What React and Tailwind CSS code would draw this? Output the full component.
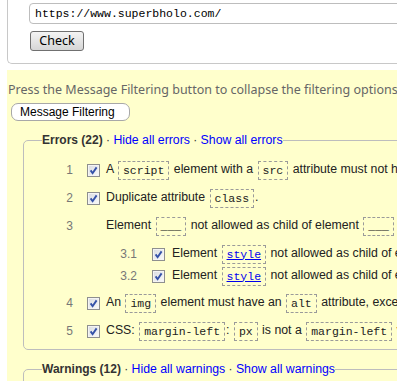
import React from "react";

function Cb() {
  return (
    <span className="relative inline-block w-[13px] h-[13px] border border-[#8e8f8f] bg-linear-to-br from-[#d8dbe0] to-[#fbfbfb] shrink-0">
      <span className="absolute inset-0 border border-[#f4f4f4]"></span>
      <svg viewBox="0 0 11 11" className="absolute left-0 top-0 w-[11px] h-[11px]">
        <path d="M2.6 5.4 L4.6 8.2 L8.6 2.4" stroke="#3552a8" strokeWidth="1.9" fill="none" strokeLinejoin="miter" />
      </svg>
    </span>
  );
}

function Code({ children, link }) {
  return (
    <span className="inline-flex items-center h-[19px] px-[4px] mx-[1px] border border-dashed border-[#9a9a9a] font-['Liberation_Mono',monospace] text-[11.5px] align-middle text-[#222]">
      {link ? <a className="text-[#0000ee] underline">{children}</a> : children}
    </span>
  );
}

function Row({ n, cb = true, sub = false, children }) {
  return (
    <div className={sub ? "flex items-center h-[22px]" : "flex items-center h-[28px]"}>
      <span className="w-[31px] text-right text-[#777] text-[12px] shrink-0">{n}</span>
      <span className={sub ? "flex w-[13px] ml-[15px] mr-[7px] shrink-0" : "flex w-[13px] ml-[14px] mr-[6px] shrink-0"}>
        {cb && <Cb />}
      </span>
      <span className="whitespace-nowrap text-[12.3px]">{children}</span>
    </div>
  );
}

export default function App() {
  return (
    <div className="w-[397px] h-[381px] overflow-hidden bg-white font-['Liberation_Sans',Arial,sans-serif] text-[12px] text-[#222]">
      <div className="ml-[7px] w-[600px] border-l border-b border-[#c8c8c8] rounded-bl-[5px] pt-[3px] pb-[12px] pl-[21px]">
        <div className="h-[21px] w-[500px] border border-[#bdbdbd] rounded-[4px] bg-white flex items-center pl-[5px] font-['Liberation_Mono',monospace] text-[11.5px] text-black">
          https://www.superbholo.com/
        </div>
        <button className="mt-[7px] ml-[1px] w-[54px] h-[20px] border border-[#707070] rounded-[3px] bg-linear-to-b from-[#f4f4f4] to-[#d6d6d6] font-['Noto_Sans',sans-serif] text-[12.5px] text-black leading-none flex items-center justify-center">
          Check
        </button>
      </div>

      <div className="mt-[6px] ml-[7px] bg-[#ffffcc] pt-[12px] h-[400px]">
        <div className="pl-[1px] h-[16px] leading-[16px] whitespace-nowrap font-['Noto_Sans',sans-serif] text-[12.5px] text-[#666]">
          Press the Message Filtering button to collapse the filtering options and error/warning/info counts.
        </div>
        <button className="mt-[5px] ml-[4px] w-[119px] h-[18px] border border-[#a8a8a8] rounded-[7px] bg-white text-[12px] text-black leading-none flex items-center pl-[8px]">
          Message Filtering
        </button>

        <fieldset className="mt-[12px] ml-[16px] border border-[#bdbdbd] rounded-[5px] pl-[18px] pt-[9px] pb-[4px]">
          <legend className="px-0 leading-[14px] whitespace-nowrap text-[#333]">
            <b>Errors (22)</b> · <a className="text-[#0000ff] text-[12.3px]">Hide all errors</a> · <a className="text-[#0000ff] text-[12.3px]">Show all errors</a>
          </legend>
          <Row n="1">
            A <Code>script</Code> element with a <Code>src</Code> attribute must not have a <Code>type</Code> attribute whose value is anything other than the empty string.
          </Row>
          <Row n="2">
            Duplicate attribute <Code>class</Code>.
          </Row>
          <Row n="3" cb={false}>
            Element <Code>___</Code> not allowed as child of element <Code>___</Code> in this context.
          </Row>
          <div className="ml-[64px] mt-[3px] mb-[2px]">
            <Row n="3.1" sub>
              Element <Code link>style</Code> not allowed as child of element <Code>body</Code> in this context.
            </Row>
            <Row n="3.2" sub>
              Element <Code link>style</Code> not allowed as child of element <Code>body</Code> in this context.
            </Row>
          </div>
          <Row n="4">
            An <Code>img</Code> element must have an <Code>alt</Code> attribute, except under certain conditions.
          </Row>
          <Row n="5">
            CSS: <Code>margin-left</Code>: <Code>px</Code> is not a <Code>margin-left</Code> value.
          </Row>
        </fieldset>

        <fieldset className="mt-[12px] ml-[16px] border border-[#bdbdbd] rounded-[5px] pl-[18px] pt-[9px] pb-[4px]">
          <legend className="px-0 leading-[14px] whitespace-nowrap text-[#333]">
            <b>Warnings (12)</b> · <a className="text-[#0000ff] text-[12.3px]">Hide all warnings</a> · <a className="text-[#0000ff] text-[12.3px]">Show all warnings</a>
          </legend>
          <Row n="1">
            The <Code>type</Code> attribute is unnecessary for JavaScript resources.
          </Row>
        </fieldset>
      </div>
    </div>
  );
}
